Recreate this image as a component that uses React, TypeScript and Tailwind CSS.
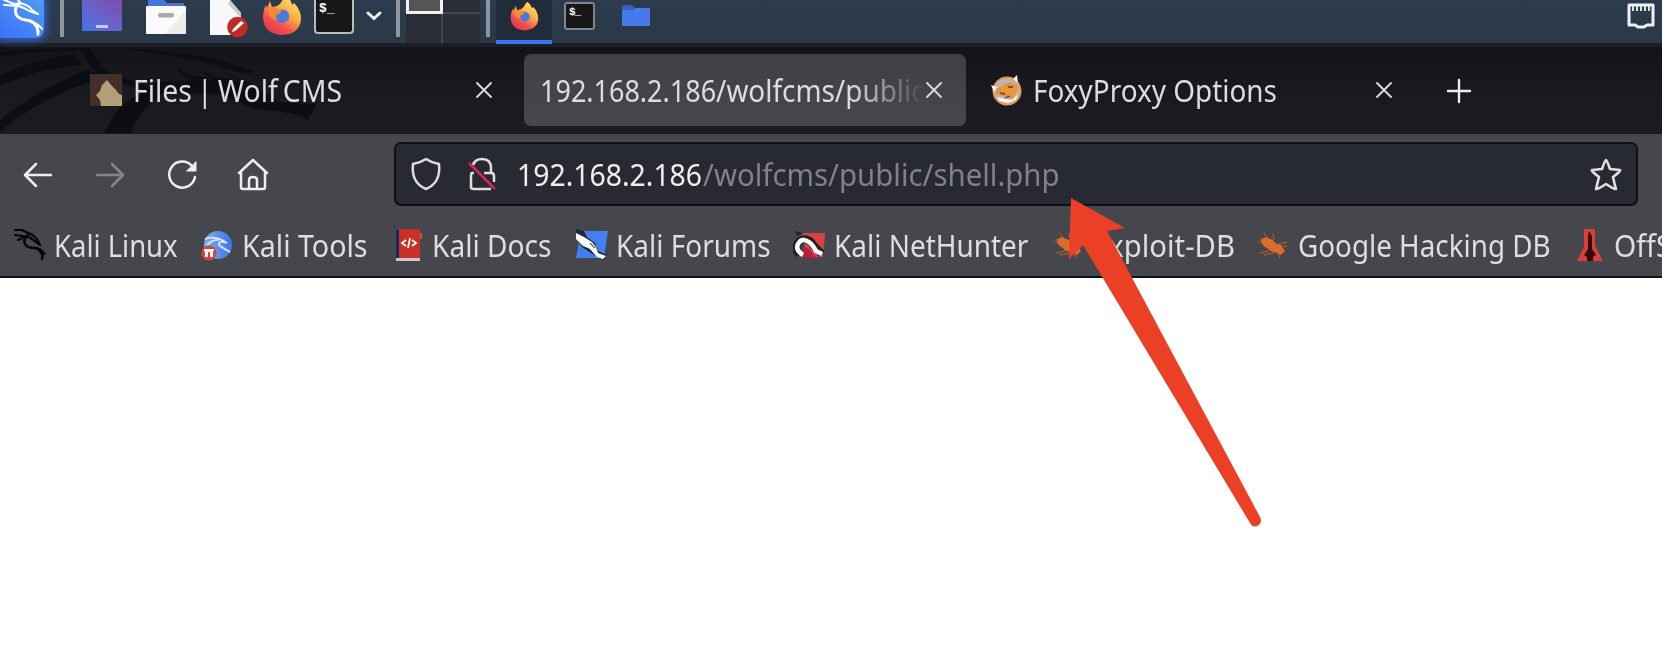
import React, { type ReactNode } from "react";

function KaliMenu() {
  return (
    <div className="h-[38px] w-11 rounded-br-lg bg-gradient-to-tr from-[#3f6ff5] to-[#4e9cf4] shadow-[0_0_9px_2px_#2f65dc]">
      <svg width="44" height="38" viewBox="0 0 44 38" fill="none" stroke="#fff" strokeWidth="2" strokeLinecap="round" strokeLinejoin="round">
        <path d="M19 4Q14 8 16 14Q18 19 26 20Q39 22 38 34" strokeWidth="3" />
        <path d="M2 -1L14 4L20 3Q29 5 32 10L38 14Q30 12 26 9L19 6L4 5" strokeWidth="2" />
        <path d="M20 2L17 -1M31 22Q38 23 42 29M34 24Q38 28 38 35" strokeWidth="1.800" />
      </svg>
    </div>
  );
}

function Firefox({ size }: { size: number }) {
  return (
    <svg width={size} height={size} viewBox="0 0 40 40">
      <defs>
        <linearGradient id="flame" x1="0.85" y1="0.05" x2="0.25" y2="1">
          <stop offset="0" stopColor="#ffe56a" />
          <stop offset="0.4" stopColor="#fbad45" />
          <stop offset="0.72" stopColor="#f4504a" />
          <stop offset="1" stopColor="#dc3554" />
        </linearGradient>
      </defs>
      <path fill="url(#flame)" d="M24 0Q29 3 30 9L32 7Q39 14 39 23Q38 38 20 39Q2 38 1 22Q1 14 4 9L5 12L8 5L10 11L15 10Q19 8 21 3Q22 1 24 0Z" />
      <path fill="#4b78dc" d="M13 17Q17 12 23 14Q28 16 27 22Q25 27 19 27Q13 26 13 17Z" />
      <path fill="#f58a36" d="M7 12Q12 10 15 12L20 15Q18 18 14 19Q13 22 16 24Q9 24 7 18Z" />
    </svg>
  );
}

function Separator() {
  return <div className="h-[37px] w-1 shrink-0 bg-[#8e969e]" />;
}

function Taskbar() {
  return (
    <header className="flex h-[47px] shrink-0 items-start border-b-4 border-[#1e1f26] bg-gradient-to-b from-[#2c3c4c] to-[#2b3848]">
      <KaliMenu />
      <div className="ml-4"><Separator /></div>
      <div className="ml-[18px] flex h-[31px] w-10 items-end justify-center bg-gradient-to-tr from-[#4176e8] to-[#7d4bae] pb-[3px]">
        <div className="h-[3px] w-3 bg-[#c9c6ee]" />
      </div>
      <svg className="ml-[23px]" width="41" height="35">
        <path d="M3 0H19L22 3H39V8H3Z" fill="#4674dc" />
        <rect x="1" y="6" width="40" height="28" rx="1" fill="#fafafa" />
        <path d="M41 10V34H20Z" fill="#ececec" />
        <rect x="13" y="13" width="16" height="4.500" rx="2" fill="#aaa" />
      </svg>
      <svg className="ml-6" width="38" height="38">
        <path d="M0 0H20L31 13V35H0Z" fill="#f9f9f9" />
        <path d="M20 0L31 13V18L18 4Z" fill="#ccc" />
        <circle cx="27.500" cy="27" r="10.300" fill="#c02b25" />
        <path d="M22 32L23 29L31 21L34 23L25 31Z" fill="#fff" />
      </svg>
      <div className="-mt-[4px] ml-[14px]"><Firefox size={40} /></div>
      <div className="ml-[12px] h-[34px] w-10 rounded-b-sm border-2 border-t-0 border-[#b9bbbc] bg-[#171717]">
        <div className="pl-[3px] pt-px font-['Liberation_Mono'] text-[13px] font-bold leading-[15px] text-white">$_</div>
      </div>
      <svg className="ml-[11px]" width="18" height="24" fill="none" stroke="#f0f1f2" strokeWidth="3" strokeLinecap="round"><path d="M3 13L9 18.500L15 13" /></svg>
      <div className="ml-[13px]"><Separator /></div>
      <div className="ml-[6px] grid h-[43px] w-[74px] grid-cols-[37px_37px] grid-rows-[14px_29px] bg-[#2a2d38]">
        <div className="border-x-[3px] border-b-[3px] border-[#f0f0f0] bg-[#555]" />
        <div className="border-b-2 border-[#424554]" />
        <div className="border-r-2 border-[#424554]" />
        <div />
      </div>
      <div className="ml-[6px]"><Separator /></div>
      <div className="ml-[6px] flex h-11 w-14 justify-center border-b-4 border-[#3d72ef] bg-[#202c3b] pt-[2px]"><Firefox size={29} /></div>
      <div className="ml-3 mt-[2px] h-7 w-[31px] rounded-[3px] border-2 border-[#828687] bg-[#171717]">
        <div className="pl-[3px] pt-px font-['Liberation_Mono'] text-[11px] font-bold leading-[14px] tracking-[-1px] text-white">$_</div>
      </div>
      <svg className="ml-[27px] mt-[5px]" width="28" height="22"><path d="M0 2Q0 0 2 0H10L13 3H28V7H0Z" fill="#355fc0" /><path d="M0 5H11L14 3H28V21H0Z" fill="#4779e8" /></svg>
      <svg className="ml-auto mr-[6px] mt-[2px]" width="30" height="27" fill="none" stroke="#edf1f1">
        <path d="M3 3H27V23H21L18 25H12L9 23H3Z" strokeWidth="3" strokeLinejoin="round" />
        <path d="M7 3V9M11 3V9M15 3V9M19 3V9M23 3V9" strokeWidth="1.800" />
      </svg>
    </header>
  );
}

function Label({ children, className = "" }: { children: ReactNode; className?: string }) {
  return <span className={`block w-max origin-left whitespace-nowrap text-[30.5px] leading-[44px] ${className}`}>{children}</span>;
}

function Close() {
  return (
    <svg className="shrink-0" width="18" height="18" viewBox="0 0 18 18" fill="none" stroke="#dadada" strokeWidth="1.900" strokeLinecap="round">
      <path d="M2 2L16 16M16 2L2 16" />
    </svg>
  );
}

function TabStrip() {
  return (
    <div className="relative flex h-[87px] shrink-0 items-center bg-gradient-to-b from-[#131419] via-[#191a1f] to-[#1b1c21] pb-px text-[#dddddd]">
      <svg className="absolute left-0 top-0" width="340" height="86" fill="#0d0e13">
        <path d="M125 2Q150 1 205 10Q235 17 254 25L245 27Q185 7 125 2Z" />
        <path d="M0 5Q38 1 78 1V4Q38 4 0 9Z" />
        <path d="M0 28Q36 12 73 7L82 17Q36 23 0 38Z" />
        <path d="M0 73Q43 39 88 23L106 30Q42 48 0 85Z" />
        <path d="M78 1H89L107 25L165 45Q140 60 131 86H105Q116 54 148 44L100 30Z" />
        <path d="M176 17Q180 28 200 29L215 34Q202 26 199 18Q205 29 224 31L240 35Q226 28 222 21Q230 31 248 35L279 55L317 57L308 73Q293 64 254 62L220 47L150 45L155 35L191 33Q178 27 176 17Z" />
      </svg>
      <div className="relative flex h-full w-[524px] items-center pl-[90px]">
        <svg className="shrink-0" width="32" height="32"><path d="M0 0H32V32H0Z" fill="#44302a" /><path d="M11 32L10 26L6 21L10 17L12 11L17 6L21 11L26 16L29 20L32 21V32Z" fill="#b59f76" /></svg>
        <div className="ml-[11px] w-[331px]"><Label className="scale-x-[0.93] [word-spacing:-2.500px]">Files | Wolf CMS</Label></div>
        <div className="ml-[11px]"><Close /></div>
      </div>
      <div className="relative flex h-[72px] w-[442px] items-center rounded-[7px] bg-gradient-to-b from-[#3f4045] to-[#47484d] pl-4">
        <div className="flex w-[385px] overflow-hidden [mask-image:linear-gradient(to_right,black_310px,transparent_385px)]">
          <div className="w-[176px] shrink-0"><Label className="scale-x-[0.885]">192.168.2.186</Label></div>
          <Label className="scale-x-[0.915]">/wolfcms/public</Label>
        </div>
        <Close />
      </div>
      <svg className="ml-6 shrink-0" width="34" height="34" viewBox="0 0 34 34">
        <circle cx="17" cy="18" r="13.500" fill="#b5b7ba" stroke="#e89a4b" strokeWidth="2" />
        <path d="M6 16L12 13L19 9L27 12L28 16L23 26L13 23L6 21Z" fill="#ed9439" />
        <path d="M1 12L7 14L4 19ZM23 6L27 2L28 10ZM7 24L15 26L22 27L28 21L26 27L18 30L9 28Z" fill="#f6f6f6" />
        <path d="M10 20L15 21M18 14L23 14M15 25L20 23" stroke="#74553a" strokeWidth="1.800" />
      </svg>
      <div className="ml-[9px] w-[342px]"><Label className="scale-x-[0.915]">FoxyProxy Options</Label></div>
      <Close />
      <svg className="ml-[53px] mt-[2px]" width="26" height="26" stroke="#eeeeee" strokeWidth="2.400" strokeLinecap="round"><path d="M13 2V24M2 13H24" /></svg>
    </div>
  );
}

function NavBar() {
  return (
    <div className="flex h-[80px] shrink-0 items-center text-[#eeeeee]">
      <svg width="394" height="80" fill="none" stroke="currentColor" strokeWidth="2.500" strokeLinecap="round" strokeLinejoin="round">
        <path d="M51 41H25M36 30L25 41L36 52" />
        <path d="M97 41H123M112 30L123 41L112 52" stroke="#85868a" />
        <path d="M192 32A13 13 0 1 0 195 43" />
        <path d="M196 28V37H187Z" fill="currentColor" strokeWidth="1" />
        <path d="M239 39L253 26L267 39M241 37V53Q241 55 243 55H263Q265 55 265 53V37M249 55V46Q249 43 253 43Q257 43 257 46V55" />
      </svg>
      <div className="flex h-16 w-[1244px] items-center rounded-[7px] border-2 border-[#101116] bg-[#282a33]">
        <svg className="shrink-0" width="121" height="60" fill="none" stroke="#dedee0" strokeWidth="2.500" strokeLinejoin="round">
          <path d="M30 15Q36 19 43 20Q45 39 30 45Q15 39 17 20Q24 19 30 15Z" />
          <path d="M77 21Q79 15 86 15Q95 15 95 24V29Q98 29 98 32V38M78 29H76Q75 29 75 32V43Q75 45 78 45H95M88 29H95" />
          <path d="M73 19L99 45" stroke="#d82950" />
        </svg>
        <div className="w-[186px]"><Label className="scale-x-[0.93]">192.168.2.186</Label></div>
        <div className="text-[#818287]"><Label className="scale-x-[0.963]">/wolfcms/public/shell.php</Label></div>
        <svg className="ml-auto mr-[13px] shrink-0" width="34" height="34" viewBox="0 0 34 34" fill="none" stroke="#dfdfe1" strokeWidth="2.600" strokeLinejoin="round">
          <path d="M17 3Q18 3 21 12L31 13Q32 14 24 20Q26 29 27 32Q26 33 17 27Q8 33 7 32L10 20Q2 14 3 13L13 12Q16 3 17 3Z" />
        </svg>
      </div>
    </div>
  );
}

function Bug() {
  return (
    <svg width="32" height="32"><path d="M1 12L10 16L4 10M13 12L8 4M18 11L17 4M23 15L31 13M24 18L31 17M13 22L4 24M18 24L8 26M22 24L24 29" stroke="#9f592c" strokeWidth="1.300" fill="none" /><path d="M5 11Q9 6 14 10Q17 10 19 14L25 16L29 22L25 26L18 23Q13 22 11 19Q5 16 5 11Z" fill="#dd6b2c" /></svg>
  );
}

const icons: Record<string, ReactNode> = {
  linux: (
    <svg width="34" height="34" fill="none" stroke="#050505" strokeWidth="2.600" strokeLinejoin="round" strokeLinecap="round">
      <path d="M15 7Q10 11 12 16Q14 20 22 20Q31 21 29 31" />
      <path d="M2 2L9 2L15 5Q23 7 27 17Q22 13 16 9L9 8L2 7M5 12L14 8" strokeWidth="2.200" />
      <path d="M24 20Q28 21 32 26M25 21L28 25" strokeWidth="1.800" />
    </svg>
  ),
  tools: (
    <svg width="32" height="32"><defs><linearGradient id="sphere"><stop stopColor="#7cafe7" /><stop offset="1" stopColor="#3e73ef" /></linearGradient></defs><circle cx="17" cy="16" r="14" fill="url(#sphere)" /><path d="M4 10Q14 6 26 14Q17 11 18 16Q20 18 29 23M6 16Q12 10 18 11" fill="none" stroke="#d8e8ff" strokeWidth="1.800" /><circle cx="8" cy="24" r="7.500" fill="#dd413b" /><path d="M3 20H13V22H12V28H9V23H7V28H4V22H3Z" fill="#fff" /></svg>
  ),
  docs: <svg width="27" height="32"><path d="M1 1H4V30H1Z" fill="#152a64" /><path d="M4 0H25V29H4Z" fill="#cb3028" /><path d="M1 29H25V32H1Z" fill="#d6c5ca" /><path d="M25 4H27V10H25Z" fill="#9b6b32" /><path d="M11 11L7 14L11 17M17 11L21 14L17 17M15 9L13 19" fill="none" stroke="#fff" strokeWidth="1.800" /></svg>,
  forums: <svg width="34" height="32"><path d="M6 2H33L29 29H1Z" fill="#427ff0" /><path d="M1 0L9 2L12 8L20 14L23 22L32 26L29 31L19 26L7 18L1 9Z" fill="#222832" /><path d="M1 4L9 8L17 13L21 18L23 24L31 27L28 30L22 28L15 20L8 17L1 10Z" fill="#fff" /><path d="M15 14L20 19" stroke="#667080" strokeWidth="1.500" /></svg>,
  nethunter: <svg width="34" height="32"><path d="M9 4H32L30 28H14Z" fill="#dc4142" /><path d="M1 2L10 4L5 7Z" fill="#24252a" /><path d="M6 26Q0 17 7 12Q15 7 21 17L29 25" fill="none" stroke="#202126" strokeWidth="8" /><path d="M9 29Q7 21 11 19Q16 18 19 24L23 29Z" fill="#b51e45" /><path d="M10 26Q2 21 5 15Q9 8 16 13Q20 16 23 22L29 25" fill="none" stroke="#fff" strokeWidth="4.500" /></svg>,
  bug: <Bug />,
  offsec: <svg width="28" height="32"><path d="M8 0H19V17L27 32H1L8 18Z" fill="#db3f37" /><path d="M13 2L16 7V20L20 26L17 28V32H11V28L8 26L12 20V7Z" fill="#300b0c" /></svg>,
};

const bookmarks = [
  { title: "Kali Linux", icon: "linux", slot: "w-[187px] pl-[13px]", gap: "w-[41px]", text: "scale-x-[0.9]" },
  { title: "Kali Tools", icon: "tools", slot: "w-[205px] pl-[14px]", gap: "w-[41px]", text: "scale-x-[0.938]" },
  { title: "Kali Docs", icon: "docs", slot: "w-[182px] pl-[3px]", gap: "w-[37px]", text: "scale-x-[0.922]" },
  { title: "Kali Forums", icon: "forums", slot: "w-[218px] pl-[1px]", gap: "w-[41px]", text: "scale-x-[0.917]" },
  { title: "Kali NetHunter", icon: "nethunter", slot: "w-[258px] pl-[1px]", gap: "w-[41px]", text: "scale-x-[0.916]" },
  { title: "Exploit-DB", icon: "bug", slot: "w-[206px] pl-[2px]", gap: "w-[40px]", text: "scale-x-[0.96]" },
  { title: "Google Hacking DB", icon: "bug", slot: "w-[320px]", gap: "w-[42px]", text: "scale-x-[0.912]" },
  { title: "OffSec", icon: "offsec", slot: "w-[86px]", gap: "w-[38px]", text: "scale-x-[0.935]" },
];

function BookmarkBar() {
  return (
    <nav className="flex h-[64px] shrink-0 overflow-hidden border-b-2 border-[#111217] text-[#dededf]">
      {bookmarks.map((b) => (
        <div key={b.title} className={`flex h-[61px] shrink-0 items-center ${b.slot}`}>
          <div className={`shrink-0 ${b.gap}`}>{icons[b.icon]}</div>
          <Label className={b.text}>{b.title}</Label>
        </div>
      ))}
    </nav>
  );
}

export default function App() {
  return (
    <div className="relative flex h-[672px] w-[1662px] flex-col overflow-hidden bg-white font-['Noto_Sans',sans-serif]">
      <Taskbar />
      <TabStrip />
      <div className="bg-[#46474c]"><NavBar /><BookmarkBar /></div>
      <main className="flex-1 bg-white" />
      <svg className="absolute left-[1068px] top-[198px]" width="196" height="332">
        <path d="M3 0L57 30L39 33L192 319Q195 325 189 328Q185 330 182 325L15 47L1 61Z" fill="#eb4026" />
      </svg>
    </div>
  );
}
